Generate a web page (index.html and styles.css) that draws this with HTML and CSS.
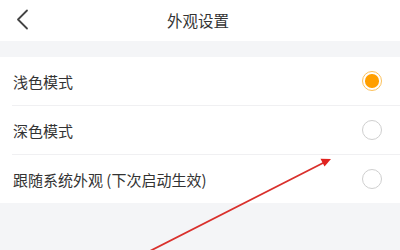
FILE: index.html
```html
<!DOCTYPE html>
<html lang="zh-CN">
<head>
<meta charset="utf-8">
<title>外观设置</title>
<link rel="stylesheet" href="styles.css">
</head>
<body>
<div class="page">
  <header class="topbar">
    <span class="back">
      <svg width="14" height="22" viewBox="0 0 14 22"><polyline points="11,1.5 2,10.5 11,19.5" fill="none" stroke="#444" stroke-width="1.8" stroke-linecap="round" stroke-linejoin="round"/></svg>
    </span>
    <h1 class="title">外观设置</h1>
  </header>
  <div class="spacer"></div>
  <ul class="options">
    <li class="option"><span class="label">浅色模式</span><span class="radio radio-on"><span class="dot"></span></span></li>
    <li class="option"><span class="label">深色模式</span><span class="radio"></span></li>
    <li class="option"><span class="label">跟随系统外观 (下次启动生效)</span><span class="radio"></span></li>
  </ul>
  <svg class="arrow" width="400" height="250" viewBox="0 0 400 250">
    <line x1="148" y1="252" x2="324" y2="162.5" stroke="#d9302c" stroke-width="1.8" stroke-linecap="round"/>
    <polygon points="331,159 320.5,158.8 324.5,166.5" fill="#e0231f"/>
  </svg>
</div>
</body>
</html>
```
FILE: styles.css
```css
html, body {
  margin: 0;
  padding: 0;
}
body {
  background: #f4f5f7;
  font-family: "Noto Sans CJK SC", "Noto Sans", sans-serif;
  color: #333;
}
.page {
  position: relative;
  width: 400px;
  height: 250px;
  overflow: hidden;
}
.topbar {
  height: 41px;
  background: #fff;
  display: flex;
  align-items: center;
  justify-content: center;
  position: relative;
}
.back {
  position: absolute;
  left: 16px;
  top: 9px;
  display: flex;
}
.title {
  margin: 0;
  font-size: 15.5px;
  font-weight: normal;
  color: #333;
  line-height: 1;
  padding-right: 4px;
}
.spacer {
  height: 16px;
}
.options {
  list-style: none;
  margin: 0;
  padding: 0 0 0 12px;
  background: #fff;
}
.option {
  height: 49px;
  display: flex;
  align-items: center;
  justify-content: space-between;
  padding-right: 18px;
  border-bottom: 1px solid #f0f0f2;
  box-sizing: border-box;
}
.option:last-child {
  border-bottom: none;
  height: 48px;
}
.label {
  font-size: 15px;
  padding-left: 1px;
  color: #333;
}
.radio {
  width: 20px;
  height: 20px;
  box-sizing: border-box;
  border: 1px solid #cfcfcf;
  border-radius: 50%;
  display: flex;
  align-items: center;
  justify-content: center;
}
.radio-on {
  border: 1.5px solid #fcc15a;
}
.dot {
  width: 13.5px;
  height: 13.5px;
  border-radius: 50%;
  background: #ff9f00;
}
.arrow {
  position: absolute;
  left: 0;
  top: 0;
  pointer-events: none;
}
```
